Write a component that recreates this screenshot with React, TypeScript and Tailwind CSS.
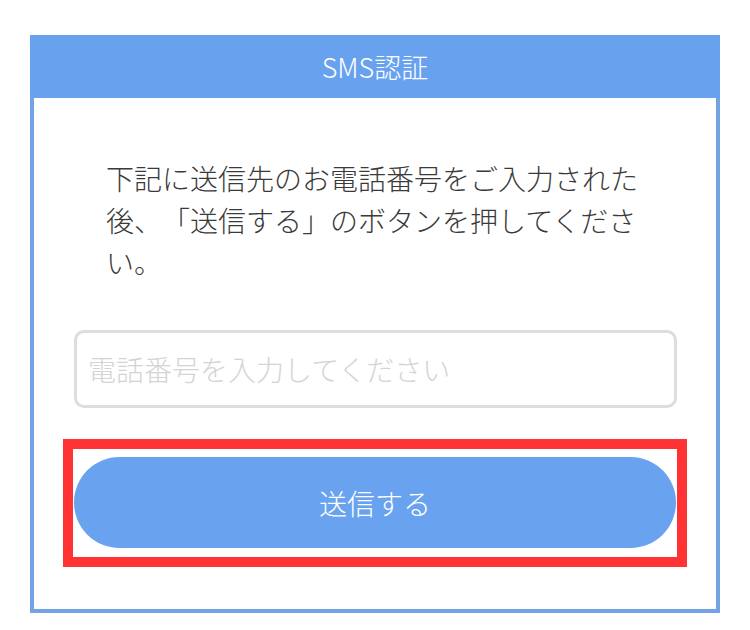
export default function App() {
  const font = { fontFamily: '"Noto Sans CJK JP", "Noto Sans", sans-serif' };
  return (
    <div className="w-[750px] h-[630px] bg-white pt-[35px] pl-[30px] [text-spacing-trim:space-all]" style={font}>
      <div className="w-[690px] flex flex-col">
        <div className="h-[63px] bg-[#68a2ef] flex items-center justify-center text-white text-[27px] leading-none font-light">
          SMS認証
        </div>
        <div className="h-[515px] border-x-4 border-b-4 border-[#72a4e4] bg-white flex flex-col">
          <p className="mt-[59px] ml-[72px] w-[546px] text-[28px] leading-[42px] text-[#3a3a3a] font-light [text-spacing-trim:space-all]">
            下記に送信先のお電話番号をご入力された後、「送信する」のボタンを押してください。
          </p>
          <input
            type="tel"
            placeholder="電話番号を入力してください"
            className="mt-[47px] ml-[40px] w-[603px] h-[78px] border-[3px] border-[#dddddd] rounded-[10px] px-[11px] text-[28px] text-[#333] font-light placeholder:text-[#d4d4d4] outline-none"
            style={font}
          />
          <div className="mt-[31px] ml-[29px] w-[624px] h-[128px] border-[10px] border-[#ff3333] pt-[8px] pl-px">
            <button
              className="w-[602px] h-[91px] rounded-full bg-[#69a3f0] text-white text-[28px] font-light flex items-center justify-center"
              style={font}
            >
              送信する
            </button>
          </div>
        </div>
      </div>
    </div>
  );
}
